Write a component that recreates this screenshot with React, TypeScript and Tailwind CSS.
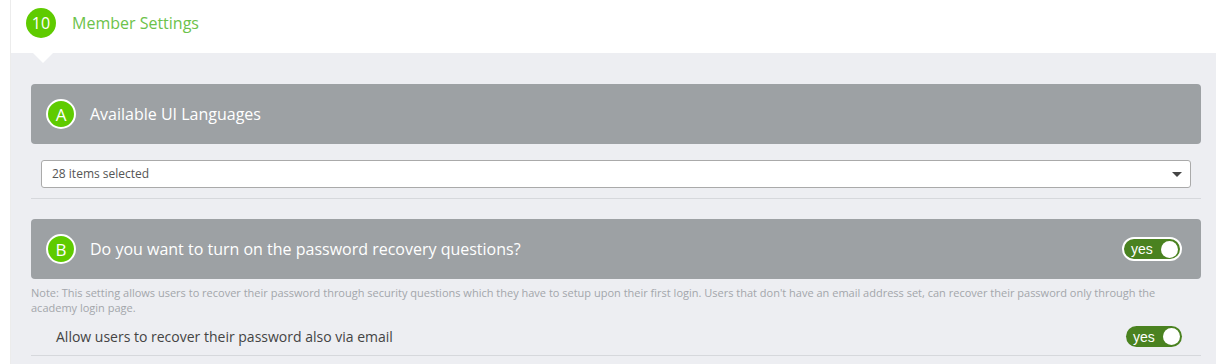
const font = { fontFamily: '"Open Sans", "Noto Sans", sans-serif' };

function Badge({ label }: { label: string }) {
  return (
    <span className="flex h-[30px] w-[30px] shrink-0 items-center justify-center rounded-full border-2 border-white bg-[#5fcb00] text-[17px] leading-none text-white">
      {label}
    </span>
  );
}

function Toggle({ bordered }: { bordered?: boolean }) {
  return (
    <span
      className={
        bordered
          ? 'flex h-[24px] w-[60px] items-center justify-between rounded-full border-2 border-white bg-[#4a8220] pl-[7px] pr-[2px]'
          : 'flex h-[21px] w-[56px] items-center justify-between rounded-full bg-[#4a8220] pl-[7px] pr-[2px]'
      }
    >
      <span className="text-[14px] leading-none text-white" style={{ fontFamily: '"Liberation Sans", Arial, sans-serif' }}>
        yes
      </span>
      <span className="h-[17px] w-[17px] rounded-full bg-white" />
    </span>
  );
}

function SectionHeader({ badge, title, toggle }: { badge: string; title: string; toggle?: boolean }) {
  return (
    <div className="flex h-[60px] items-center justify-between rounded-[4px] bg-[#9da1a4] pl-[15px] pr-[19px]">
      <div className="flex items-center gap-[14px]">
        <Badge label={badge} />
        <span className="text-[16px] text-white">{title}</span>
      </div>
      {toggle ? <Toggle bordered /> : null}
    </div>
  );
}

export default function App() {
  return (
    <div className="flex h-[364px] w-[1216px] overflow-hidden bg-white" style={font}>
      <div className="w-[11px] shrink-0 border-r border-[#ececec] bg-white" />
      <div className="flex flex-1 flex-col">
        <div className="flex h-[53px] items-start gap-[16px] pl-[15px] pt-[8px]">
          <span className="flex h-[30px] w-[30px] items-center justify-center rounded-full bg-[#5fcb00] text-[16px] leading-none text-white">
            10
          </span>
          <span className="text-[16px] leading-[30px] text-[#6cc24a]">Member Settings</span>
        </div>
        <div className="relative flex-1 bg-[#edeef2] pl-[20px] pr-[15px] pt-[31px]">
          <div className="absolute left-[22px] top-0 h-0 w-0 border-x-[10px] border-t-[10px] border-x-transparent border-t-white" />
          <SectionHeader badge="A" title="Available UI Languages" />
          <div className="px-[10px] pt-[16px]">
            <div className="flex h-[28px] items-center justify-between rounded-[3px] border border-[#aaaaaa] bg-white pl-[10px] pr-[8px]">
              <span className="text-[12px] text-[#555]">28 items selected</span>
              <span className="h-0 w-0 border-x-[5px] border-t-[5px] border-x-transparent border-t-[#444]" />
            </div>
          </div>
          <div className="mt-[10px] border-t border-[#d6d8dc]" />
          <div className="mt-[20px]">
            <SectionHeader badge="B" title="Do you want to turn on the password recovery questions?" toggle />
          </div>
          <p className="mt-[6px] text-[11px] leading-[15px] text-[#a3a6ab]">
            Note: This setting allows users to recover their password through security questions which they have to setup upon their first login. Users that don't have an email address set, can recover their password only through the academy login page.
          </p>
          <div className="mt-[11px] flex items-center justify-between pb-[8px] pl-[25px] pr-[19px]">
            <span className="text-[14px] text-[#444]">Allow users to recover their password also via email</span>
            <Toggle />
          </div>
          <div className="border-t border-[#d6d8dc]" />
        </div>
      </div>
    </div>
  );
}
